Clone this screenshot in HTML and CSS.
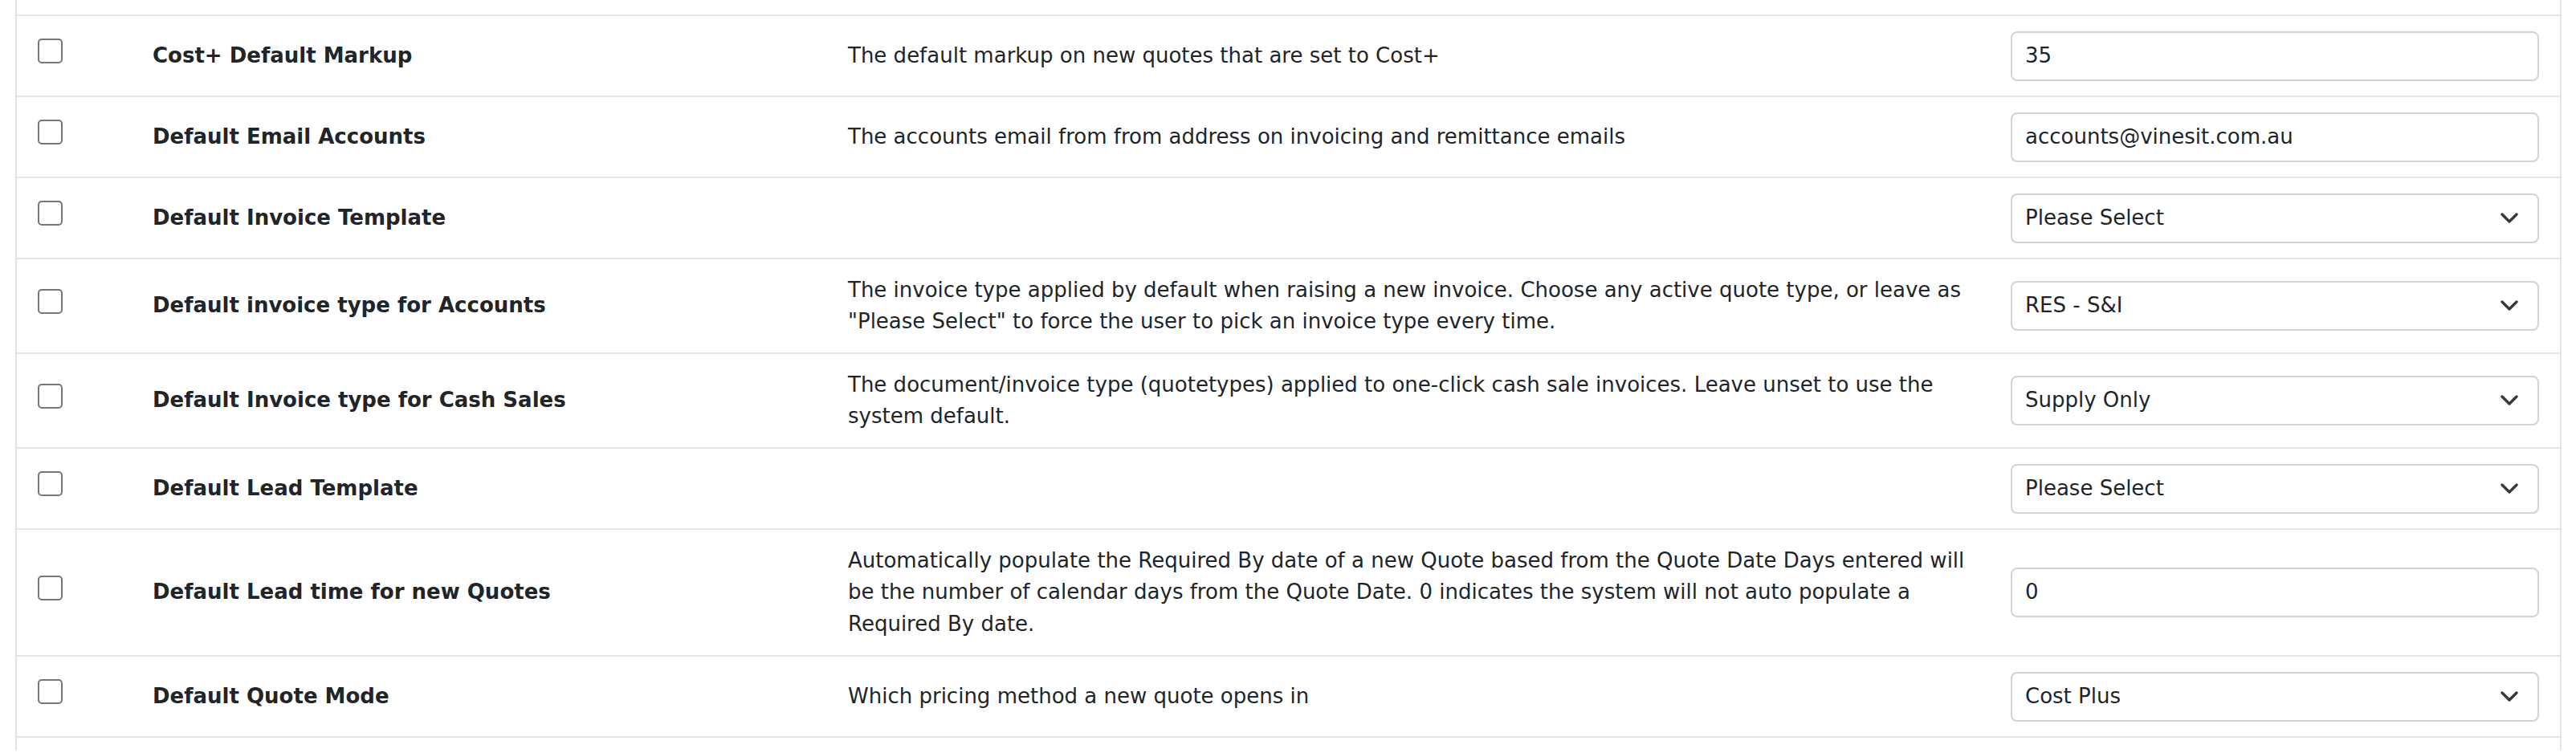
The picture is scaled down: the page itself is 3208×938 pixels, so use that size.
FILE: index.html
```html
<!DOCTYPE html>
<html lang="en">
<head>
<meta charset="utf-8">
<title>Settings</title>
<link rel="stylesheet" href="styles.css">
</head>
<body>
<div class="settings">
  <div class="row">
    <div class="check-cell"><span class="check"></span></div>
    <div class="label"></div>
    <div class="desc"></div>
    <div class="field"></div>
  </div>
  <div class="row">
    <div class="check-cell"><span class="check"></span></div>
    <div class="label">Cost+ Default Markup</div>
    <div class="desc">The default markup on new quotes that are set to Cost+</div>
    <div class="field"><span class="value">35</span></div>
  </div>
  <div class="row">
    <div class="check-cell"><span class="check"></span></div>
    <div class="label">Default Email Accounts</div>
    <div class="desc">The accounts email from from address on invoicing and remittance emails</div>
    <div class="field"><span class="value">accounts@vinesit.com.au</span></div>
  </div>
  <div class="row">
    <div class="check-cell"><span class="check"></span></div>
    <div class="label">Default Invoice Template</div>
    <div class="desc"></div>
    <div class="field select"><span class="value">Please Select</span><svg class="chev" viewBox="0 0 22 14" width="22" height="14"><path d="M2 2 L11 11 L20 2"/></svg></div>
  </div>
  <div class="row">
    <div class="check-cell"><span class="check"></span></div>
    <div class="label">Default invoice type for Accounts</div>
    <div class="desc">The invoice type applied by default when raising a new invoice. Choose any active quote type, or leave as "Please Select" to force the user to pick an invoice type every time.</div>
    <div class="field select"><span class="value">RES - S&amp;I</span><svg class="chev" viewBox="0 0 22 14" width="22" height="14"><path d="M2 2 L11 11 L20 2"/></svg></div>
  </div>
  <div class="row">
    <div class="check-cell"><span class="check"></span></div>
    <div class="label">Default Invoice type for Cash Sales</div>
    <div class="desc">The document/invoice type (quotetypes) applied to one-click cash sale invoices. Leave unset to use the system default.</div>
    <div class="field select"><span class="value">Supply Only</span><svg class="chev" viewBox="0 0 22 14" width="22" height="14"><path d="M2 2 L11 11 L20 2"/></svg></div>
  </div>
  <div class="row">
    <div class="check-cell"><span class="check"></span></div>
    <div class="label">Default Lead Template</div>
    <div class="desc"></div>
    <div class="field select"><span class="value">Please Select</span><svg class="chev" viewBox="0 0 22 14" width="22" height="14"><path d="M2 2 L11 11 L20 2"/></svg></div>
  </div>
  <div class="row">
    <div class="check-cell"><span class="check"></span></div>
    <div class="label">Default Lead time for new Quotes</div>
    <div class="desc">Automatically populate the Required By date of a new Quote based from the Quote Date Days entered will be the number of calendar days from the Quote Date. 0 indicates the system will not auto populate a Required By date.</div>
    <div class="field"><span class="value">0</span></div>
  </div>
  <div class="row">
    <div class="check-cell"><span class="check"></span></div>
    <div class="label">Default Quote Mode</div>
    <div class="desc">Which pricing method a new quote opens in</div>
    <div class="field select"><span class="value">Cost Plus</span><svg class="chev" viewBox="0 0 22 14" width="22" height="14"><path d="M2 2 L11 11 L20 2"/></svg></div>
  </div>
  <div class="row-tail"></div>
</div>
</body>
</html>
```

FILE: styles.css
```css
html, body {
  margin: 0;
  padding: 0;
  background: #ffffff;
}

body {
  font-family: "DejaVu Sans", "Liberation Sans", sans-serif;
  font-size: 26px;
  line-height: 39.6px;
  color: #212529;
  overflow: hidden;
  height: 938px;
}

.settings {
  margin: -81px 0 0 19px;
  width: 3171px;
  box-sizing: border-box;
  border-left: 2px solid #e3e4e9;
  border-right: 2px solid #e3e4e9;
}

.row {
  display: grid;
  grid-template-columns: 169px 866px 1448px 658px;
  align-items: center;
  padding: 18.5px 26px 18.5px 0;
  border-bottom: 2px solid #e3e4e9;
}

.row-tail {
  height: 16px;
}

.check-cell {
  padding-left: 26px;
  display: flex;
}

.check {
  display: block;
  width: 31px;
  height: 31px;
  box-sizing: border-box;
  border: 2.5px solid #767676;
  border-radius: 5px;
  margin-bottom: 12px;
  background: #ffffff;
}

.label {
  font-weight: bold;
}

.desc {
  padding-right: 36px;
}

.field {
  height: 62px;
  box-sizing: border-box;
  border: 2px solid #ced4da;
  border-radius: 8px;
  padding: 0 16px;
  display: flex;
  align-items: center;
  justify-content: space-between;
  background: #ffffff;
}

.select {
  padding-right: 24px;
}

.chev {
  display: block;
  fill: none;
  stroke: #343a40;
  stroke-width: 3.4;
  stroke-linecap: round;
  stroke-linejoin: round;
}
```
